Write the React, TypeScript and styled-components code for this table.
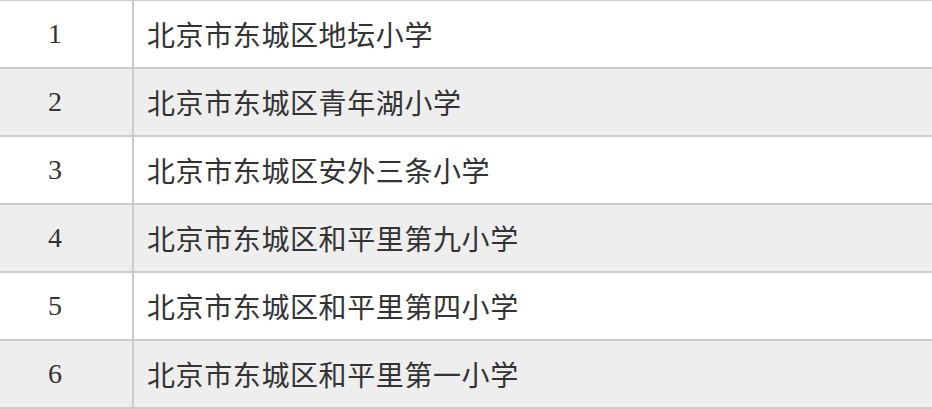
import React from 'react';
import styled, { createGlobalStyle } from 'styled-components';

const GlobalStyle = createGlobalStyle`
  html, body {
    margin: 0;
    padding: 0;
    background: #ffffff;
    overflow: hidden;
  }
`;

const Table = styled.table`
  width: 932px;
  border-collapse: collapse;
  margin-top: -1px;
  font-family: "Liberation Serif", "Noto Sans CJK SC", serif;
  color: #333333;
`;

const Row = styled.tr<{ $striped: boolean }>`
  height: 68px;
  background: ${(p) => (p.$striped ? '#eeeeee' : '#ffffff')};
  border-top: 2px solid #cccccc;
  border-bottom: 2px solid #cccccc;
`;

const IndexCell = styled.td`
  width: 110px;
  padding: 0 22px 0 0;
  text-align: center;
  font-size: 28px;
  border-right: 2px solid #cccccc;
`;

const NameCell = styled.td`
  padding: 0 0 0 13px;
  font-size: 28px;
  letter-spacing: 0.6px;
  text-align: left;
`;

const schools = [
  '北京市东城区地坛小学',
  '北京市东城区青年湖小学',
  '北京市东城区安外三条小学',
  '北京市东城区和平里第九小学',
  '北京市东城区和平里第四小学',
  '北京市东城区和平里第一小学',
];

const App: React.FC = () => (
  <>
    <GlobalStyle />
    <Table>
      <tbody>
        {schools.map((name, i) => (
          <Row key={name} $striped={i % 2 === 1}>
            <IndexCell>{i + 1}</IndexCell>
            <NameCell>{name}</NameCell>
          </Row>
        ))}
      </tbody>
    </Table>
  </>
);

export default App;
